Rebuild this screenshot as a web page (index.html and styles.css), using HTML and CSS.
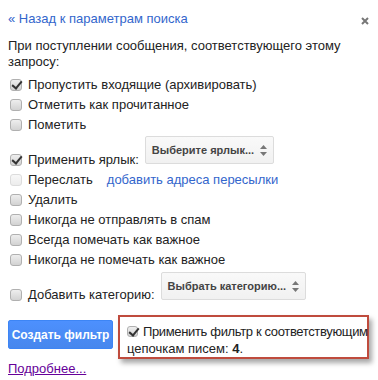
FILE: index.html
```html
<!DOCTYPE html>
<html lang="ru">
<head>
    <meta charset="UTF-8">
    <meta name="viewport" content="width=device-width, initial-scale=1.0">
    <title>Создать фильтр</title>
    <link rel="stylesheet" href="styles.css">
</head>
<body>

    <!-- Filter options panel -->
    <div class="panel">
        <div class="top-bar">
            <a href="#" class="back-link">« Назад к параметрам поиска</a>
            <span class="close">
                <svg width="8" height="8" viewBox="0 0 8 8"><path d="M1 1L7 7M7 1L1 7" stroke="#777" stroke-width="2"/></svg>
            </span>
        </div>

        <p class="intro">При поступлении сообщения, соответствующего этому запросу:</p>

        <div class="options">
            <div class="row"><span class="box checked"></span>Пропустить входящие (архивировать)</div>
            <div class="row"><span class="box"></span>Отметить как прочитанное</div>
            <div class="row"><span class="box"></span>Пометить</div>
            <div class="row with-select">
                <span class="label"><span class="box checked"></span>Применить ярлык:</span>
                <span class="select">Выберите ярлык...
                    <svg class="arrows" width="7" height="11" viewBox="0 0 7 11"><path d="M3.5 0L7 4H0Z M3.5 11L7 7H0Z" fill="#777"/></svg>
                </span>
            </div>
            <div class="row"><span class="box disabled"></span>Переслать <a href="#" class="forward-link">добавить адреса пересылки</a></div>
            <div class="row"><span class="box"></span>Удалить</div>
            <div class="row"><span class="box"></span>Никогда не отправлять в спам</div>
            <div class="row"><span class="box"></span>Всегда помечать как важное</div>
            <div class="row"><span class="box"></span>Никогда не помечать как важное</div>
            <div class="row with-select second">
                <span class="label"><span class="box"></span>Добавить категорию:</span>
                <span class="select">Выбрать категорию...
                    <svg class="arrows" width="7" height="11" viewBox="0 0 7 11"><path d="M3.5 0L7 4H0Z M3.5 11L7 7H0Z" fill="#777"/></svg>
                </span>
            </div>
        </div>

        <div class="actions">
            <button class="create-btn">Создать фильтр</button>
            <div class="apply-box">
                <span class="first-line"><span class="box checked"></span>Применить фильтр к соответствующим</span> цепочкам писем: <b>4</b>.
            </div>
        </div>

        <a href="#" class="more-link">Подробнее...</a>
    </div>

</body>
</html>
```

FILE: styles.css
```css
/* General styles */
body {
    font-family: 'Liberation Sans', Arial, sans-serif;
    font-size: 13px;
    color: #222;
    margin: 0;
    padding: 0;
    background-color: #fff;
}

.panel {
    padding: 9px 8px 0;
}

/* Top bar */
.top-bar {
    display: flex;
    justify-content: space-between;
    line-height: 20px;
}

.back-link {
    color: #3366cc;
    text-decoration: none;
}

.close {
    margin-right: 1px;
    padding-top: 2px;
}

.intro {
    margin: 7px 0 0;
    line-height: 16px;
}

/* Option rows */
.options {
    margin-top: 5px;
}

.row {
    display: flex;
    align-items: center;
    height: 20px;
    line-height: 20px;
    white-space: nowrap;
}

.row.with-select {
    height: auto;
    align-items: flex-end;
}

.label {
    display: flex;
    align-items: center;
}

.row.with-select .select {
    margin: 1px 0 6px 6px;
}

.row.second .select {
    margin: 2px 0 5px 6px;
}

/* Checkboxes */
.box {
    display: inline-block;
    box-sizing: border-box;
    width: 12px;
    height: 12px;
    margin: 0 6px 0 2px;
    border: 1px solid #b0b0b0;
    border-radius: 3px;
    background: linear-gradient(#eeeeee, #d2d2d2);
    flex-shrink: 0;
    position: relative;
}

.box.checked::after {
    content: "";
    position: absolute;
    left: 3px;
    top: -1px;
    width: 4px;
    height: 8px;
    border: solid #333;
    border-width: 0 2px 2px 0;
    transform: rotate(40deg);
}

.box.disabled {
    border-color: #dcdcdc;
    background: linear-gradient(#f8f8f8, #ececec);
}

.forward-link {
    color: #3366cc;
    text-decoration: none;
    margin-left: 14px;
}

/* Select lookalike */
.select {
    display: flex;
    align-items: center;
    box-sizing: border-box;
    height: 28px;
    padding: 0 6px;
    border: 1px solid #dcdcdc;
    border-radius: 2px;
    background: linear-gradient(#f9f9f9, #f1f1f1);
    color: #444;
    font-size: 11px;
    font-weight: bold;
}

.arrows {
    margin-left: 6px;
}

/* Actions */
.actions {
    display: flex;
    align-items: flex-start;
    padding-top: 10px;
}

.create-btn {
    margin-top: 5px;
    width: 105px;
    height: 29px;
    padding: 0;
    white-space: nowrap;
    font-family: inherit;
    font-size: 12px;
    font-weight: bold;
    color: #fff;
    background: linear-gradient(#4d90fe, #4787ed);
    border: 1px solid #3d85f5;
    border-radius: 2px;
}

.apply-box {
    box-sizing: border-box;
    width: 251px;
    margin-left: 5px;
    padding: 6px 0 0 7px;
    height: 44px;
    line-height: 17px;
    border: 2px solid #bf4b3d;
    box-shadow: 3px 4px 5px rgba(0, 0, 0, 0.35);
}

.first-line {
    white-space: nowrap;
    letter-spacing: -0.35px;
}

.apply-box .box {
    width: 11px;
    height: 11px;
    margin: 0 5px 0 0;
    vertical-align: -1px;
}

.more-link {
    display: inline-block;
    margin-top: 2px;
    color: #660099;
    line-height: 16px;
}
```
